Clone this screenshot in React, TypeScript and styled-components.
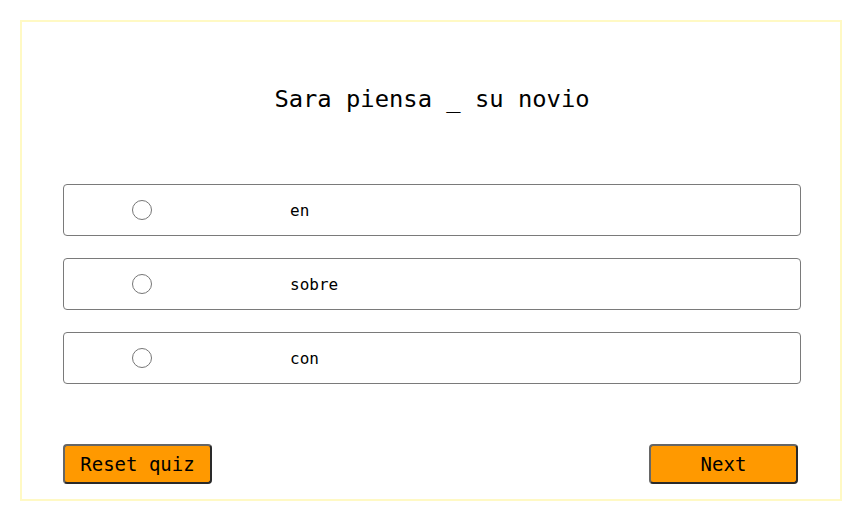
import { useState } from 'react';
import styled, { createGlobalStyle } from 'styled-components';

const GlobalStyle = createGlobalStyle`
  html, body {
    margin: 0;
    padding: 0;
    background: #ffffff;
  }
  body {
    font-family: "DejaVu Sans Mono", "Liberation Mono", monospace;
  }
`;

const Page = styled.div`
  padding: 20px;
`;

const Card = styled.div`
  box-sizing: border-box;
  width: 822px;
  height: 481px;
  border: 2px solid #fff9c4;
  padding: 0 39px 0 41px;
  display: flex;
  flex-direction: column;
`;

const Question = styled.h2`
  margin: 62px 0 0;
  height: 30px;
  line-height: 30px;
  text-align: center;
  font-size: 23.8px;
  font-weight: normal;
  color: #000;
`;

const Options = styled.div`
  margin-top: 70px;
  display: flex;
  flex-direction: column;
  gap: 22px;
`;

const Option = styled.label`
  box-sizing: border-box;
  width: 738px;
  height: 52px;
  border: 1px solid #7a7a7a;
  border-radius: 4px;
  display: flex;
  align-items: center;
  padding-left: 68px;
  cursor: pointer;
`;

const Radio = styled.span<{ $checked: boolean }>`
  box-sizing: border-box;
  width: 20px;
  height: 20px;
  border-radius: 50%;
  border: 1px solid #767676;
  background: #fff;
  display: flex;
  align-items: center;
  justify-content: center;
  &::after {
    content: '';
    width: 10px;
    height: 10px;
    border-radius: 50%;
    background: ${(p) => (p.$checked ? '#1a73e8' : 'transparent')};
  }
`;

const OptionText = styled.span`
  margin-left: 138px;
  font-size: 16px;
  color: #000;
`;

const Footer = styled.div`
  margin-top: 60px;
  display: flex;
  justify-content: space-between;
  width: 735px;
`;

const Button = styled.button`
  box-sizing: border-box;
  width: 149px;
  height: 40px;
  background: #ff9900;
  border: 2px solid #2a2a2a;
  border-top-color: #666;
  border-left-color: #666;
  border-radius: 4px;
  font-family: "DejaVu Sans Mono", "Liberation Mono", monospace;
  font-size: 19px;
  color: #000;
  padding: 0;
  cursor: pointer;
`;

const answers = ['en', 'sobre', 'con'];

export default function App() {
  const [selected, setSelected] = useState<number | null>(null);

  return (
    <>
      <GlobalStyle />
      <Page>
        <Card>
          <Question>Sara piensa _ su novio</Question>
          <Options>
            {answers.map((a, i) => (
              <Option key={a} onClick={() => setSelected(i)}>
                <Radio $checked={selected === i} />
                <OptionText>{a}</OptionText>
              </Option>
            ))}
          </Options>
          <Footer>
            <Button onClick={() => setSelected(null)}>Reset quiz</Button>
            <Button>Next</Button>
          </Footer>
        </Card>
      </Page>
    </>
  );
}
